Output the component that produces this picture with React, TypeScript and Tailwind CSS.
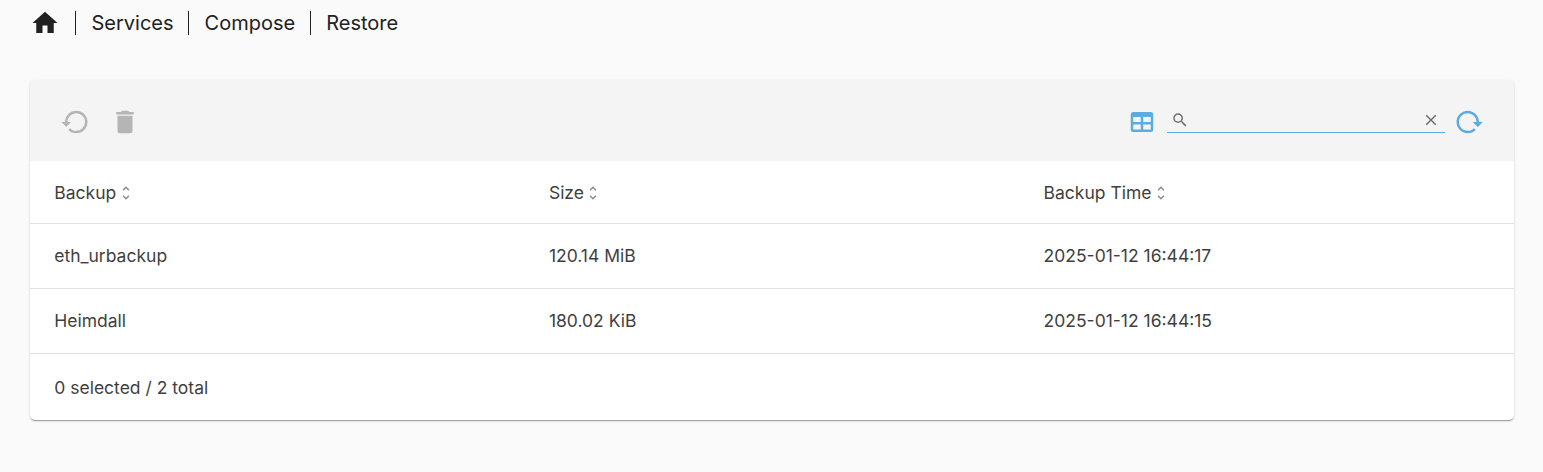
import React from "react";

const rows = [
  ["eth_urbackup", "120.14 MiB", "2025-01-12 16:44:17"],
  ["Heimdall", "180.02 KiB", "2025-01-12 16:44:15"],
];

const icons = {
  home: "M10 20v-6h4v6h5v-8h3L12 3L2 12h3v8z",
  restore:
    "M13 3A9 9 0 0 0 4 12H1L4.89 15.89L4.96 16.03L9 12H6A7 7 0 0 1 13 5A7 7 0 0 1 20 12A7 7 0 0 1 13 19C11.07 19 9.32 18.21 8.06 16.94L6.64 18.36C8.27 20 10.5 21 13 21A9 9 0 0 0 22 12A9 9 0 0 0 13 3Z",
  trash: "M19 4h-3.5l-1-1h-5l-1 1H5v2h14M6 19a2 2 0 0 0 2 2h8a2 2 0 0 0 2-2V7H6z",
  table:
    "M5 4H19A2 2 0 0 1 21 6V18A2 2 0 0 1 19 20H5A2 2 0 0 1 3 18V6A2 2 0 0 1 5 4M5 8V12H11V8H5M13 8V12H19V8H13M5 14V18H11V14H5M13 14V18H19V14H13Z",
  search:
    "M9.5 3A6.5 6.5 0 0 1 16 9.5C16 11.11 15.41 12.59 14.44 13.73L14.71 14H15.5L20.5 19L19 20.5L14 15.5V14.71L13.73 14.44C12.59 15.41 11.11 16 9.5 16A6.5 6.5 0 0 1 3 9.5A6.5 6.5 0 0 1 9.5 3M9.5 5C7 5 5 7 5 9.5C5 12 7 14 9.5 14C12 14 14 12 14 9.5C14 7 12 5 9.5 5Z",
  close: "M19 6.41L17.59 5L12 10.59L6.41 5L5 6.41L10.59 12L5 17.59L6.41 19L12 13.41L17.59 19L19 17.59L13.41 12L19 6.41Z",
  reload:
    "M2 12C2 16.97 6.03 21 11 21C13.39 21 15.68 20.06 17.4 18.4L15.9 16.9C14.63 18.25 12.86 19 11 19C4.76 19 1.64 11.46 6.05 7.05C10.46 2.64 18 5.77 18 12H15L19 16H19.1L23 12H20C20 7.03 15.97 3 11 3C6.03 3 2 7.03 2 12Z",
  sort: "M12 18.17L8.83 15L7.42 16.41L12 21L16.59 16.41L15.17 15M12 5.83L15.17 9L16.58 7.59L12 3L7.41 7.59L8.83 9L12 5.83Z",
};

function Icon({ name, className }: { name: keyof typeof icons; className: string }) {
  return (
    <svg viewBox="0 0 24 24" fill="currentColor" className={className} aria-hidden="true">
      <path d={icons[name]} />
    </svg>
  );
}

function Crumb({ label }: { label: string }) {
  return (
    <>
      <span className="ml-[15px] h-6 w-px bg-[#212121]" />
      <span className="ml-[15.5px] mr-[-0.5px]">{label}</span>
    </>
  );
}

export default function App() {
  return (
    <div className="h-[472px] bg-[#fafafa] font-['Inter',sans-serif] text-[#212121]">
      <nav className="flex h-[46px] items-center pl-[30px] text-[20px]">
        <Icon name="home" className="size-[30px]" />
        <Crumb label="Services" />
        <Crumb label="Compose" />
        <Crumb label="Restore" />
      </nav>
      <main className="mt-[34px] mr-[29px] ml-[30px] h-[340px] overflow-hidden rounded-[5px] bg-white text-[#3f3f3f] shadow-[0_2px_1px_-1px_rgba(0,0,0,.2),0_1px_1px_0_rgba(0,0,0,.14),0_1px_3px_0_rgba(0,0,0,.12)]">
        <div className="flex h-[81px] items-center bg-[#f4f4f4] px-[30px] pt-[3px] text-[#b5b5b5]">
          <button aria-label="Restore"><Icon name="restore" className="size-[30px]" /></button>
          <button aria-label="Delete" className="ml-5"><Icon name="trash" className="size-[30px]" /></button>
          <button aria-label="Columns" className="ml-auto text-[#5dacdf]"><Icon name="table" className="size-[30px]" /></button>
          <div className="mr-[9px] mb-1 ml-[10px] flex h-[25px] w-[278px] items-center border-b border-[#5dacdf] pr-[5px] pl-[3.5px] text-[#707070]">
            <Icon name="search" className="size-[18px]" />
            <input aria-label="Search" className="min-w-0 flex-1 outline-none" />
            <Icon name="close" className="size-[18px]" />
          </div>
          <button aria-label="Reload" className="text-[#5dacdf]"><Icon name="reload" className="size-[30px]" /></button>
        </div>
        <div className="grid h-[63px] grid-cols-3 items-center border-b border-[#e0e0e0] pt-0.5 text-[17.5px]">
          {["Backup", "Size", "Backup Time"].map((h) => (
            <div key={h} className="flex items-center pl-[24.25px]">
              {h}
              <Icon name="sort" className="mb-px ml-[0.5px] size-[18px] text-[#8a8a8a]" />
            </div>
          ))}
        </div>
        {rows.map((r) => (
          <div key={r[0]} className="grid h-[65px] grid-cols-3 items-center border-b border-[#e0e0e0] text-[17.5px]">
            {r.map((c) => (
              <span key={c} className="pl-[24.25px]">{c}</span>
            ))}
          </div>
        ))}
        <div className="flex h-[66px] items-center pt-0.5 pl-[24.25px] text-[17.5px]">0 selected / 2 total</div>
      </main>
    </div>
  );
}
